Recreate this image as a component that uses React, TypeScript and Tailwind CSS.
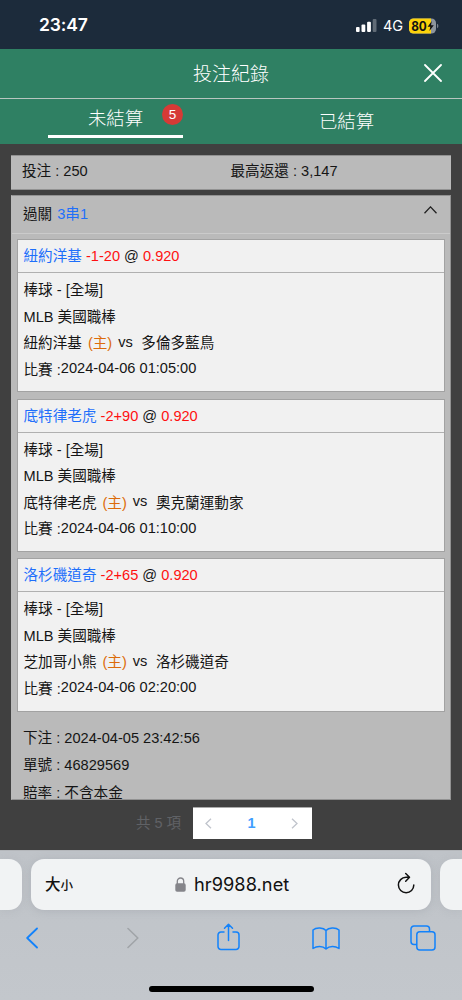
import React, { useState } from 'react';

interface Bet {
    pick: string;
    handicap: string;
    odds: string;
    home: string;
    away: string;
    time: string;
}

const bets: Bet[] = [
    { pick: '紐約洋基', handicap: '-1-20', odds: '0.920', home: '紐約洋基', away: '多倫多藍鳥', time: '2024-04-06 01:05:00' },
    { pick: '底特律老虎', handicap: '-2+90', odds: '0.920', home: '底特律老虎', away: '奧克蘭運動家', time: '2024-04-06 01:10:00' },
    { pick: '洛杉磯道奇', handicap: '-2+65', odds: '0.920', home: '芝加哥小熊', away: '洛杉磯道奇', time: '2024-04-06 02:20:00' },
];

const StatusBar: React.FC = () => (
    <div className="flex h-[49px] shrink-0 items-center bg-[#1c2b3b] pt-[2px] pl-[39px] text-white font-['Inter']">
        <span className="w-[317px] text-[17.5px] font-semibold tracking-[-0.1px]">23:47</span>
        <svg width="21" height="13" viewBox="0 0 21 13" fill="#fff">
            <rect x="0" y="8" width="3.6" height="5" rx="1" />
            <rect x="5.5" y="5.5" width="3.8" height="7.5" rx="1" />
            <rect x="11.1" y="2.8" width="3.8" height="10.2" rx="1" />
            <rect x="16.7" y="0" width="3.8" height="13" rx="1" opacity=".3" />
        </svg>
        <span className="ml-[6px] w-[26px] text-[14.5px] tracking-[-0.2px]">4G</span>
        <svg width="31" height="16" viewBox="0 0 31 16">
            <defs>
                <clipPath id="cell">
                    <rect x="0" y="0.5" width="27" height="15" rx="4.5" />
                </clipPath>
            </defs>
            <g clipPath="url(#cell)">
                <rect width="27" height="16" fill="#8d959d" />
                <rect width="22" height="16" fill="#fcd20b" />
            </g>
            <path d="M28.2 5.8c1.5.6 1.5 3.8 0 4.4z" fill="#8d959d" />
            <text x="2.2" y="12.7" fontSize="13" fontWeight="700" fill="#111" textLength="15.6" lengthAdjust="spacingAndGlyphs">80</text>
            <path d="M22.8 3 18.600 8.700h2.700l-.9 4.300 4.400-5.700h-2.800z" fill="#111" />
        </svg>
    </div>
);

const BetCard: React.FC<{ bet: Bet }> = ({ bet }) => (
    <div className="mb-[6.4px] h-[153.3px] border border-[#a2a2a2] bg-[#f1f1f1] text-[14.6px] whitespace-nowrap">
        <div className="h-[33px] border-b border-[#b0b0b0] pl-[5.5px] leading-[33px]">
            <span className="text-[#1e6ffb]">{bet.pick}</span> <span className="text-[#ff1010]">{bet.handicap}</span> @ <span className="text-[#ff1010]">{bet.odds}</span>
        </div>
        <div className="pt-[4px] pl-[5.5px] leading-[26.5px]">
            <div>棒球 - [全場]</div>
            <div>MLB 美國職棒</div>
            <div className="flex h-[26.5px]">
                <span>{bet.home}</span>
                <span className="ml-[6px] text-[#dc6b0a]">(主)</span>
                <span className="-mt-[1.5px] ml-[6px]">vs</span>
                <span className="ml-[8.5px]">{bet.away}</span>
            </div>
            <div className="flex h-[26.5px]">
                <span>比賽 :</span>
                <span className="-mt-[1.5px]">{bet.time}</span>
            </div>
        </div>
    </div>
);

const SafariBar: React.FC = () => (
    <div className="h-[150px] shrink-0 border-t border-[#b4b7bb] bg-linear-to-b from-[#bfc3c8] to-[#c3c7cc] pt-[8px] text-[#111] font-['Inter','Noto_Sans_CJK_TC',sans-serif]">
        <div className="flex h-[51px] justify-between">
            <div className="w-[22px] rounded-r-[13px] bg-[#f1f3f4] shadow-[0_1px_8px_#8b90982e]" />
            <div className="flex w-[400px] items-center rounded-[13px] bg-[#f1f3f4] pr-[16px] pl-[14px] shadow-[0_1px_8px_#8b909855]">
                <span className="w-[130px] text-[15.5px] font-medium">大<span className="text-[12.5px]">小</span></span>
                <svg width="11" height="15" viewBox="0 0 11 15">
                    <path d="M2.3 7V4.2a3.2 3.2 0 0 1 6.4 0V7" fill="none" stroke="#85858a" strokeWidth="1.3" />
                    <rect x="0.3" y="6.3" width="10.4" height="8.5" rx="1.8" fill="#85858a" />
                </svg>
                <span className="ml-[8px] flex-1 text-[18.2px] tracking-[0.05px]">hr9988.net</span>
                <svg className="-mt-[3px]" width="18" height="22" viewBox="0 0 18 22" fill="none" stroke="#111" strokeWidth="1.5" strokeLinecap="round" strokeLinejoin="round">
                    <path d="M12.2 5.3H9A7.7 7.7 0 1 0 16.8 13M8.7 1.5l3.8 3.7-3.8 4" />
                </svg>
            </div>
            <div className="w-[22px] rounded-l-[13px] bg-[#f1f3f4] shadow-[0_1px_8px_#8b90982e]" />
        </div>
        <div className="flex h-[56px] items-center pl-[26px] text-[#1282fb]">
            <svg width="12" height="22" viewBox="0 0 12 22" fill="none" stroke="currentColor" strokeWidth="1.8" strokeLinecap="round" strokeLinejoin="round">
                <path d="M11 1.5 1.2 11 11 20.5" />
            </svg>
            <svg className="ml-[89px]" width="12" height="22" viewBox="0 0 12 22" fill="none" stroke="#a0a4a8" strokeWidth="1.6" strokeLinecap="round" strokeLinejoin="round">
                <path d="M1 1.5 10.8 11 1 20.5" />
            </svg>
            <svg className="-mt-[2px] ml-[78px]" width="23" height="28" viewBox="0 0 23 28" fill="none" stroke="currentColor" strokeWidth="1.5" strokeLinecap="round" strokeLinejoin="round">
                <path d="M7 9H4a3 3 0 0 0-3 3v11.5a3 3 0 0 0 3 3h15a3 3 0 0 0 3-3V12a3 3 0 0 0-3-3h-3M11.5 17.5V1.3M7.5 5.2l4-4 4 4" />
            </svg>
            <svg className="ml-[72px]" width="28" height="23" viewBox="0 0 28 23" fill="none" stroke="currentColor" strokeWidth="1.5" strokeLinejoin="round">
                <path d="M14 3.5C11.5.5 4.500-.2 1 3v18.5c4-2.7 9.5-2.7 13 .5 3.500-3.200 9-3.200 13-.5V3c-3.500-3.200-10.500-2.500-13 .5zV22" />
            </svg>
            <svg className="ml-[70px]" width="26" height="26" viewBox="0 0 26 26" fill="none" stroke="currentColor" strokeWidth="1.5">
                <path d="M6.800 19.500H4a3 3 0 0 1-3-3V4a3 3 0 0 1 3-3h12.500a3 3 0 0 1 3 3v2.800" />
                <rect x="6.800" y="6.800" width="18.200" height="18.200" rx="3" />
            </svg>
        </div>
        <div className="mx-auto mt-[20px] h-[5.5px] w-[165px] rounded-full bg-black" />
    </div>
);

const App: React.FC = () => {
    const [tab, setTab] = useState('open');

    return (
        <div className="flex h-[1000px] w-[462px] flex-col overflow-hidden bg-[#404040] font-['Liberation_Sans','Noto_Sans_CJK_TC',sans-serif] text-[#151515]">
            <StatusBar />
            <header className="grid h-[50px] shrink-0 grid-cols-[60px_1fr_60px] items-center border-b border-[#b8c6c0] bg-[#2f8063] text-white">
                <h1 className="col-start-2 pt-[3px] text-center text-[19px] font-light">投注紀錄</h1>
                <button className="-mt-[2px] ml-[22px]" aria-label="關閉">
                    <svg width="18" height="18" viewBox="0 0 18 18" stroke="#fff" strokeWidth="1.8" strokeLinecap="round">
                        <path d="m1 1 16 16M17 1 1 17" />
                    </svg>
                </button>
            </header>
            <nav className="grid h-[45px] shrink-0 grid-cols-2 bg-[#2f8063] text-[18.4px] font-light text-white">
                <button className="relative flex flex-col items-center" onClick={() => setTab('open')}>
                    <span className="h-[36px] leading-[40px]">未結算</span>
                    {tab === 'open' && <span className="h-[3px] w-[135px] bg-white" />}
                    <span className="absolute top-[5px] left-[162px] h-[21px] w-[21px] rounded-full bg-[#d63a36] text-center text-[13.500px] leading-[21px] font-normal">5</span>
                </button>
                <button className="leading-[45px]" onClick={() => setTab('settled')}>已結算</button>
            </nav>

            <main className="flex min-h-0 flex-1 flex-col px-[11px] pt-[10.500px]">
                <div className="grid h-[35.500px] shrink-0 grid-cols-2 border-y border-[#929292] bg-[#bababa] pl-[11px] text-[14.600px] leading-[30px]">
                    <span>投注 : 250</span>
                    <span className="-ml-[6px]">最高返還 : 3,147</span>
                </div>

                <section className="mt-[5px] h-[605px] shrink-0 overflow-hidden border border-[#929292] border-l-[#bababa] bg-[#bababa] text-[14.600px]">
                    <div className="flex h-[37.500px] items-start justify-between border-b border-[#cbcbcb] pr-[13px] pl-[11px] leading-[36px]">
                        <span>過關 <span className="ml-[1px] text-[#1e6ffb]">3串1</span></span>
                        <svg className="mt-[10px]" width="13" height="8" viewBox="0 0 13 8" fill="none" stroke="#222" strokeWidth="1.300">
                            <path d="M.5 7.300 6.500.900l6 6.400" />
                        </svg>
                    </div>
                    <div className="px-[5px] pt-[5.500px]">
                        {bets.map((bet) => (
                            <BetCard key={bet.pick} bet={bet} />
                        ))}
                    </div>
                    <div className="pt-[6.500px] pl-[11px] leading-[27.700px]">
                        <div>下注 : 2024-04-05 23:42:56</div>
                        <div>單號 : 46829569</div>
                        <div>賠率 : 不含本金</div>
                    </div>
                </section>

                <div className="mt-[7px] ml-[125px] flex h-[32px] shrink-0 items-center">
                    <span className="w-[57px] pt-[1px] text-[14.500px] text-[#606266]">共 5 項</span>
                    <div className="flex h-[32px] w-[119px] items-center justify-between border-t border-[#aaa] bg-white pr-[14px] pl-[12px]">
                        <svg width="7" height="11" viewBox="0 0 7 11" fill="none" stroke="#c0c4cc" strokeWidth="1.300">
                            <path d="M6 .7 1 5.500l5 4.800" />
                        </svg>
                        <span className="text-[14.500px] font-bold text-[#409eff]">1</span>
                        <svg width="7" height="11" viewBox="0 0 7 11" fill="none" stroke="#c0c4cc" strokeWidth="1.300">
                            <path d="m1 .7 5 4.800-5 4.800" />
                        </svg>
                    </div>
                </div>
            </main>

            <SafariBar />
        </div>
    );
};

export default App;
